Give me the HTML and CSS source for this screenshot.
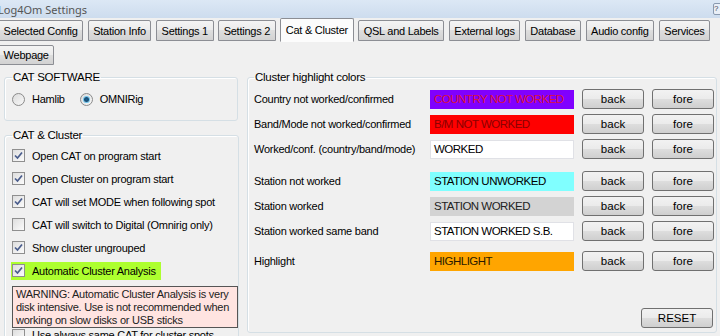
FILE: index.html
```html
<!DOCTYPE html>
<html lang="en">
<head>
<meta charset="UTF-8">
<meta name="viewport" content="width=device-width, initial-scale=1.0">
<link rel="stylesheet" href="styles.css">
</head>
<body>

<div class="titlebar">
  <span class="title">Log4Om Settings</span>
  <span class="help">?</span>
</div>

<div class="tabs">
  <div class="tab-row">
    <button type="button" class="tab">Selected Config</button>
    <button type="button" class="tab">Station Info</button>
    <button type="button" class="tab">Settings 1</button>
    <button type="button" class="tab">Settings 2</button>
    <button type="button" class="tab selected">Cat &amp; Cluster</button>
    <button type="button" class="tab">QSL and Labels</button>
    <button type="button" class="tab">External logs</button>
    <button type="button" class="tab">Database</button>
    <button type="button" class="tab">Audio config</button>
    <button type="button" class="tab">Services</button>
  </div>
  <div class="tab-row">
    <button type="button" class="tab">Webpage</button>
  </div>
</div>

<div class="page">
  <div class="left-col">
    <fieldset class="group cat-soft">
      <legend>CAT SOFTWARE</legend>
      <div class="radios">
        <label class="radio"><span class="dot"></span>Hamlib</label>
        <label class="radio checked"><span class="dot"></span>OMNIRig</label>
      </div>
    </fieldset>

    <fieldset class="group cat-cluster">
      <legend>CAT &amp; Cluster</legend>
      <div class="check checked"><span class="box"><svg width="11" height="11" viewBox="0 0 11 11"><path d="M2 5.5 L4.5 8 L9 2.5" /></svg></span>Open CAT on program start</div>
      <div class="check checked"><span class="box"><svg width="11" height="11" viewBox="0 0 11 11"><path d="M2 5.5 L4.5 8 L9 2.5" /></svg></span>Open Cluster on program start</div>
      <div class="check checked"><span class="box"><svg width="11" height="11" viewBox="0 0 11 11"><path d="M2 5.5 L4.5 8 L9 2.5" /></svg></span>CAT will set MODE when following spot</div>
      <div class="check"><span class="box"></span>CAT will switch to Digital (Omnirig only)</div>
      <div class="check checked"><span class="box"><svg width="11" height="11" viewBox="0 0 11 11"><path d="M2 5.5 L4.5 8 L9 2.5" /></svg></span>Show cluster ungrouped</div>
      <div class="check checked"><span class="hl"><span class="box"><svg width="11" height="11" viewBox="0 0 11 11"><path d="M2 5.5 L4.5 8 L9 2.5" /></svg></span>Automatic Cluster Analysis</span></div>
      <div class="warning">WARNING: Automatic Cluster Analysis is very disk intensive. Use is not recommended when working on slow disks or USB sticks</div>
      <div class="check last"><span class="box"></span>Use always same CAT for cluster spots</div>
    </fieldset>
  </div>

  <fieldset class="group colors">
    <legend>Cluster highlight colors</legend>
    <div class="color-row">
      <span class="row-label">Country not worked/confirmed</span>
      <span class="swatch country">COUNTRY NOT WORKED</span>
      <button type="button" class="btn">back</button>
      <button type="button" class="btn">fore</button>
    </div>
    <div class="color-row">
      <span class="row-label">Band/Mode not worked/confirmed</span>
      <span class="swatch bandmode">B/M NOT WORKED</span>
      <button type="button" class="btn">back</button>
      <button type="button" class="btn">fore</button>
    </div>
    <div class="color-row">
      <span class="row-label">Worked/conf. (country/band/mode)</span>
      <span class="swatch plain">WORKED</span>
      <button type="button" class="btn">back</button>
      <button type="button" class="btn">fore</button>
    </div>
    <div class="color-row spaced">
      <span class="row-label">Station not worked</span>
      <span class="swatch unworked">STATION UNWORKED</span>
      <button type="button" class="btn">back</button>
      <button type="button" class="btn">fore</button>
    </div>
    <div class="color-row">
      <span class="row-label">Station worked</span>
      <span class="swatch worked">STATION WORKED</span>
      <button type="button" class="btn">back</button>
      <button type="button" class="btn">fore</button>
    </div>
    <div class="color-row">
      <span class="row-label">Station worked same band</span>
      <span class="swatch plain">STATION WORKED S.B.</span>
      <button type="button" class="btn">back</button>
      <button type="button" class="btn">fore</button>
    </div>
    <div class="color-row tail">
      <span class="row-label">Highlight</span>
      <span class="swatch highlight">HIGHLIGHT</span>
      <button type="button" class="btn">back</button>
      <button type="button" class="btn">fore</button>
    </div>
    <div class="footer">
      <button type="button" class="btn reset">RESET</button>
    </div>
  </fieldset>
</div>

</body>
</html>
```

FILE: styles.css
```css
body {
  margin: 0;
  width: 720px;
  height: 336px;
  overflow: hidden;
  background: #f0f0f0;
  font-family: "Liberation Sans", Arial, sans-serif;
  font-size: 11px;
  letter-spacing: -0.25px;
  color: #000;
}

/* window title */
.titlebar {
  height: 18px;
  display: flex;
  align-items: center;
  justify-content: space-between;
  background: linear-gradient(#dce8f5, #cddcee);
}

.title {
  margin-left: -2px;
  font-family: "Noto Sans", sans-serif;
  font-size: 11px;
  letter-spacing: 0;
  color: #555;
}

.help {
  width: 10px;
  height: 10px;
  margin-right: -5px;
  border: 1px solid #8a9ab0;
  border-radius: 2px;
  font-size: 8px;
  line-height: 10px;
  color: #445;
  background: #e9eff7;
}

/* tabs */
.tabs {
  padding-top: 2px;
  display: flex;
  flex-direction: column;
  gap: 4px;
}

.tab-row {
  display: flex;
  gap: 4.5px;
  height: 21px;
  margin-left: -2px;
}

.tab-row + .tab-row {
  height: 20px;
}

.tab {
  height: 100%;
  padding: 0 4.6px;
  border: 1px solid #8c8e94;
  border-radius: 2px 2px 0 0;
  background: linear-gradient(#f4f4f4, #ebebeb 50%, #dedede 50%, #d2d2d2);
  font: inherit;
  letter-spacing: inherit;
  white-space: nowrap;
  color: #000;
}

.tab.selected {
  height: 24px;
  margin-top: -2px;
  background: #fcfcfc;
  border-bottom-color: #fcfcfc;
}

/* tab page */
.page {
  height: 270px;
  box-sizing: border-box;
  padding: 5px 4px 2px 4px;
  display: flex;
  gap: 9px;
}

.left-col {
  width: 234px;
  display: flex;
  flex-direction: column;
  gap: 7px;
}

.group {
  margin: 0;
  border: 1px solid #d5dfe5;
  border-radius: 3px;
  box-shadow: inset 1px 1px 0 #fff;
}

.group legend {
  padding: 0 1px;
  line-height: 15px;
  font-size: 11.5px;
}

.cat-soft {
  padding: 6px 6px 13px 7px;
}

.radios {
  display: flex;
  gap: 15px;
  height: 16px;
}

.radio {
  display: flex;
  align-items: center;
  gap: 7px;
}

.dot {
  width: 11px;
  height: 11px;
  border: 1px solid #8b8b8b;
  border-radius: 50%;
  background: linear-gradient(135deg, #dcdcdc, #f8f8f8);
  display: flex;
  align-items: center;
  justify-content: center;
}

.radio.checked .dot::after {
  content: "";
  width: 5px;
  height: 5px;
  border-radius: 50%;
  background: radial-gradient(#1b5f8e, #0c3d62);
  box-shadow: 0 0 0 1px #6ec6ef;
}

.cat-cluster {
  flex: 1;
  padding: 1px 0 0 7px;
}

.check {
  height: 23px;
  display: flex;
  align-items: center;
}

.box {
  width: 11px;
  height: 11px;
  margin-right: 7px;
  border: 1px solid #8f8f8f;
  background: linear-gradient(135deg, #dedede, #fbfbfb);
  display: flex;
  align-items: center;
  justify-content: center;
}

.box path {
  fill: none;
  stroke: #4a5d8c;
  stroke-width: 1.7;
}

.hl {
  height: 18px;
  margin-left: -1px;
  padding: 0 5px 0 1px;
  display: flex;
  align-items: center;
  background: #adff2f;
}

.warning {
  width: 219px;
  margin-top: 4px;
  padding: 1px 2px 0 3px;
  border: 1px solid #555;
  background: #ffe4e1;
  line-height: 13px;
  font-size: 11px;
  color: #222;
}

.check.last {
  height: 16px;
  margin-top: 1px;
  align-items: flex-start;
}

/* colour rows */
.colors {
  flex: 1;
  padding: 4px 2px 0 6px;
}

.color-row {
  height: 20px;
  margin-bottom: 5px;
  display: flex;
  align-items: center;
  gap: 8px;
}

.color-row.spaced {
  margin-top: 12px;
}

.color-row.tail {
  margin-top: 10px;
}

.row-label {
  width: 168px;
}

.swatch {
  width: 139px;
  height: 17px;
  padding-left: 3px;
  border: 1px solid #e0e1e6;
  line-height: 17px;
  font-size: 11.5px;
  letter-spacing: -0.5px;
  white-space: nowrap;
  overflow: hidden;
}

.country {
  background: #8000ff;
  border-color: #8000ff;
  color: #dc143c;
}

.bandmode {
  background: #ff0000;
  border-color: #ff0000;
  color: #8b0000;
}

.plain {
  background: #fff;
}

.unworked {
  background: #80ffff;
  border-color: #80ffff;
}

.worked {
  background: #d3d3d3;
  border-color: #d3d3d3;
  color: #222;
}

.highlight {
  background: #ffa500;
  border-color: #ffa500;
  color: #2a1a00;
}

.btn {
  width: 62px;
  height: 20px;
  padding: 0;
  border: 1px solid #707070;
  border-radius: 3px;
  background: linear-gradient(#f2f2f2, #ebebeb 48%, #dddddd 52%, #cfcfcf);
  font: inherit;
  font-size: 11.5px;
  color: #000;
}

.footer {
  display: flex;
  justify-content: flex-end;
  margin-top: 37px;
  padding-right: 1px;
}

.reset {
  width: 72px;
}
```
